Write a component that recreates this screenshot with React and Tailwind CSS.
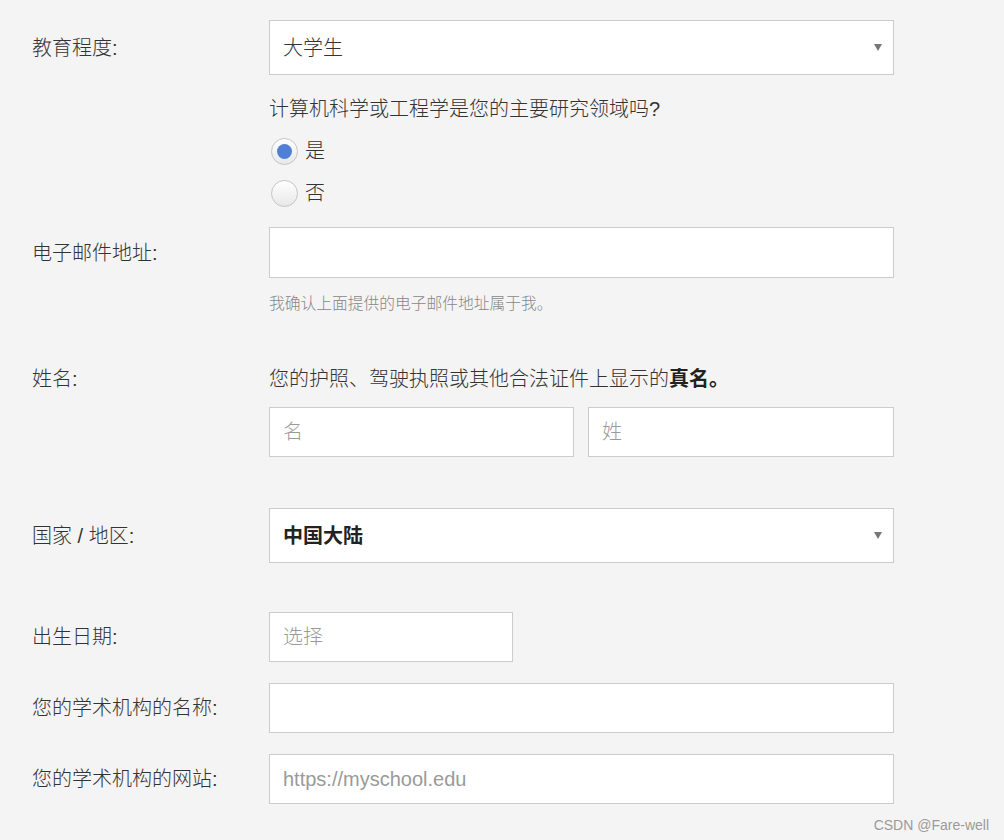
import React from "react";

const font = 'font-["Liberation_Sans","Noto_Sans_CJK_SC",sans-serif]';

function Label({ children }) {
    return <div className="w-[237px] shrink-0 text-[20px] font-light leading-[28px] text-[#333]">{children}</div>;
}

function TextInput({ placeholder, className = "w-[625px]", height = "h-[50px]" }) {
    return (
        <input
            type="text"
            placeholder={placeholder}
            className={`${className} ${height} border border-[#cccccc] bg-white px-[13px] text-[20px] font-light text-[#333] outline-none placeholder:text-[#9a9a9a] ${font}`}
        />
    );
}

function FakeSelect({ value, bold }) {
    return (
        <div className="flex h-[55px] w-[625px] items-center justify-between border border-[#cccccc] bg-white pl-[13px] pr-[11px]">
            <span className={`text-[20px] leading-[28px] ${bold ? "font-bold text-[#222]" : "font-light text-[#333]"}`}>{value}</span>
            <span className="h-0 w-0 border-l-[4.5px] border-r-[4.5px] border-t-[7px] border-l-transparent border-r-transparent border-t-[#777]"></span>
        </div>
    );
}

function Radio({ checked, label }) {
    return (
        <div className="flex h-[28px] items-center">
            <span className="ml-[2px] flex h-[27px] w-[27px] items-center justify-center rounded-full border border-[#c4c4c4] bg-gradient-to-b from-white to-[#e8e8e8]">
                {checked && <span className="h-[15px] w-[15px] rounded-full bg-[#4f80d6]"></span>}
            </span>
            <span className="ml-[7px] text-[20px] font-light leading-[28px] text-[#333]">{label}</span>
        </div>
    );
}

export default function App() {
    return (
        <div className={`relative min-h-[840px] w-full bg-[#f4f4f4] ${font}`}>
            <div className="pl-[32px] pt-[20px]">
                {/* 教育程度 */}
                <div className="flex items-center">
                    <Label>教育程度:</Label>
                    <FakeSelect value="大学生" />
                </div>
                <div className="ml-[237px]">
                    <div className="mt-[20px] text-[20px] font-light leading-[28px] text-[#333]">计算机科学或工程学是您的主要研究领域吗?</div>
                    <div className="mt-[14px]">
                        <Radio checked label="是" />
                    </div>
                    <div className="mt-[14px]">
                        <Radio label="否" />
                    </div>
                </div>

                {/* 电子邮件 */}
                <div className="mt-[20px] flex items-center">
                    <Label>电子邮件地址:</Label>
                    <TextInput height="h-[51px]" />
                </div>
                <div className="ml-[237px] mt-[16px] text-[15.75px] font-light leading-[20px] text-[#888]">我确认上面提供的电子邮件地址属于我。</div>

                {/* 姓名 */}
                <div className="mt-[51px] flex">
                    <Label>姓名:</Label>
                    <div>
                        <div className="text-[20px] font-light leading-[28px] text-[#333]">
                            您的护照、驾驶执照或其他合法证件上显示的<span className="font-bold text-[#222]">真名。</span>
                        </div>
                        <div className="mt-[14px] flex gap-[14px]">
                            <TextInput placeholder="名" className="w-[305px]" />
                            <TextInput placeholder="姓" className="w-[306px]" />
                        </div>
                    </div>
                </div>

                {/* 国家 */}
                <div className="mt-[51px] flex items-center">
                    <Label>国家 / 地区:</Label>
                    <FakeSelect value="中国大陆" bold />
                </div>

                {/* 出生日期 */}
                <div className="mt-[49px] flex items-center">
                    <Label>出生日期:</Label>
                    <TextInput placeholder="选择" className="w-[244px]" />
                </div>

                <div className="mt-[21px] flex items-center">
                    <Label>您的学术机构的名称:</Label>
                    <TextInput />
                </div>

                <div className="mt-[21px] flex items-center">
                    <Label>您的学术机构的网站:</Label>
                    <TextInput placeholder="https://myschool.edu" />
                </div>
            </div>

            <div className="absolute bottom-[6px] right-[15px] text-[14px] leading-[18px] text-[#9b9b9b]">CSDN @Fare-well</div>
        </div>
    );
}
